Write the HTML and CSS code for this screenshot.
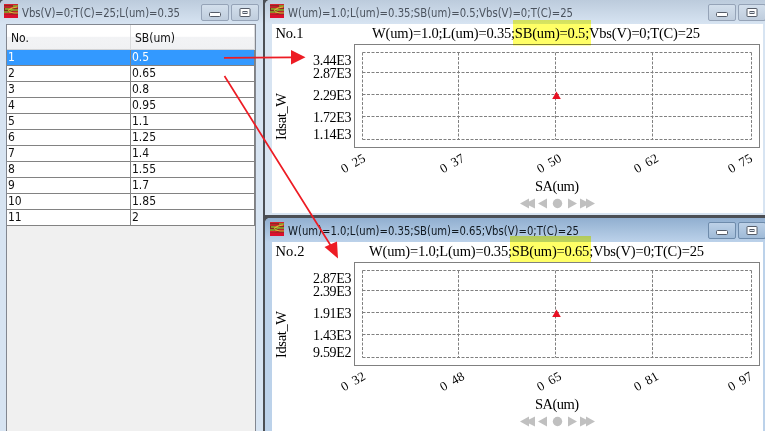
FILE: index.html
```html
<!DOCTYPE html>
<html lang="en">
<head>
<meta charset="utf-8">
<title>Idsat plots</title>
<link rel="stylesheet" href="styles.css">
</head>
<body>
<svg class="defs" width="0" height="0">
  <symbol id="logo" viewBox="0 0 14 14">
    <rect width="14" height="14" fill="#7a2c1c"/>
    <rect y="10.500" width="14" height="3.500" fill="#dc0f2e"/>
    <path d="M0 .7h14M0 3h5l4 .5h5M0 9.500h5l5-1.500h4" stroke="#d82030" stroke-width="1.300" fill="none"/>
    <path d="M1 5h5l4 1h4M0 8h4l4-1.500M9 2h5" stroke="#8cae2c" stroke-width="1.300" fill="none"/>
    <path d="M4 6.500l4-2.500 5-1M5 8l5 1h4" stroke="#e0b838" stroke-width="1.100" fill="none"/>
  </symbol>
  <symbol id="min" viewBox="0 0 12 12"><rect x=".5" y="5.500" width="11" height="4" rx="1" fill="#fff" stroke="#555c68"/></symbol>
  <symbol id="max" viewBox="0 0 12 12"><rect x="1" y="1.500" width="10" height="8" rx=".5" fill="#fff" stroke="#555c68"/><rect x="4" y="4.500" width="4" height="2" fill="#dfe6ee" stroke="#555c68"/></symbol>
  <symbol id="grid" viewBox="0 0 491 189">
    <rect class="frame" x="82.500" y="20.500" width="405" height="103"/>
    <path class="dash" d="M90.500 28.500h389M90.500 48.500h389M90.500 70.500h389M90.500 92.500h389M90.500 115.500h389M90.500 28.500v87M186.500 28.500v87M283.500 28.500v87M380.500 28.500v87M479.500 28.500v87"/>
    <path fill="#e81123" d="M284.500 67.500l4.300 7.500h-8.600z"/>
    <g fill="#c0c0c0">
      <path d="M248 179.500l9-5v3l6-3v10l-6-3v3zM266 179.500l9-5v10z"/>
      <circle cx="285.500" cy="179.500" r="4.700"/>
      <path d="M305 179.500l-9-5v10zM323 179.500l-9-5v3l-6-3v10l6-3v3z"/>
    </g>
  </symbol>
</svg>
<div class="desktop">
  <section class="window list">
    <header class="bar">
      <svg class="logo"><use href="#logo"/></svg>
      <svg class="caption"><text x="0" y="13" textLength="158" lengthAdjust="spacingAndGlyphs">Vbs(V)=0;T(C)=25;L(um)=0.35</text></svg>
      <span class="btn"><svg><use href="#min"/></svg></span><span class="btn"><svg><use href="#max"/></svg></span>
    </header>
    <div class="pane">
      <div class="row head"><span>No.</span><span>SB(um)</span></div>
      <div class="row selected"><span>1</span><span>0.5</span></div>
      <div class="row"><span>2</span><span>0.65</span></div>
      <div class="row"><span>3</span><span>0.8</span></div>
      <div class="row"><span>4</span><span>0.95</span></div>
      <div class="row"><span>5</span><span>1.1</span></div>
      <div class="row"><span>6</span><span>1.25</span></div>
      <div class="row"><span>7</span><span>1.4</span></div>
      <div class="row"><span>8</span><span>1.55</span></div>
      <div class="row"><span>9</span><span>1.7</span></div>
      <div class="row"><span>10</span><span>1.85</span></div>
      <div class="row"><span>11</span><span>2</span></div>
    </div>
  </section>
  <div class="plots">
    <section class="window plot">
      <header class="bar">
        <svg class="logo"><use href="#logo"/></svg>
        <svg class="caption"><text x="0" y="13" textLength="285" lengthAdjust="spacingAndGlyphs">W(um)=1.0;L(um)=0.35;SB(um)=0.5;Vbs(V)=0;T(C)=25</text></svg>
        <span class="btn"><svg><use href="#min"/></svg></span><span class="btn"><svg><use href="#max"/></svg></span>
      </header>
      <svg class="chart" viewBox="0 0 491 189">
        <text x="3.500" y="14" textLength="28">No.1</text>
        <text x="100" y="14" textLength="328">W(um)=1.0;L(um)=0.35;SB(um)=0.5;Vbs(V)=0;T(C)=25</text>
        <use href="#grid"/>
        <text class="tick" x="41" y="41" textLength="38.500">3.44E3</text>
        <text class="tick" x="41" y="54" textLength="38.500">2.87E3</text>
        <text class="tick" x="41" y="76" textLength="38.500">2.29E3</text>
        <text class="tick" x="41" y="98" textLength="38.500">1.72E3</text>
        <text class="tick" x="41" y="115" textLength="38.500">1.14E3</text>
        <text transform="translate(14 116) rotate(-90)" textLength="47">Idsat_W</text>
        <text class="xtick" transform="translate(72 149.500) rotate(-30)">0 25</text>
        <text class="xtick" transform="translate(171 149.500) rotate(-30)">0 37</text>
        <text class="xtick" transform="translate(268 149.500) rotate(-30)">0 50</text>
        <text class="xtick" transform="translate(365 149.500) rotate(-30)">0 62</text>
        <text class="xtick" transform="translate(459 149.500) rotate(-30)">0 75</text>
        <text x="263" y="167" textLength="44">SA(um)</text>
      </svg>
    </section>
    <section class="window plot active">
      <header class="bar">
        <svg class="logo"><use href="#logo"/></svg>
        <svg class="caption"><text x="0" y="13" textLength="291" lengthAdjust="spacingAndGlyphs">W(um)=1.0;L(um)=0.35;SB(um)=0.65;Vbs(V)=0;T(C)=25</text></svg>
        <span class="btn"><svg><use href="#min"/></svg></span><span class="btn"><svg><use href="#max"/></svg></span>
      </header>
      <svg class="chart" viewBox="0 0 491 189">
        <text x="3.500" y="14" textLength="29">No.2</text>
        <text x="97" y="14" textLength="335">W(um)=1.0;L(um)=0.35;SB(um)=0.65;Vbs(V)=0;T(C)=25</text>
        <use href="#grid"/>
        <text class="tick" x="41" y="41" textLength="38.500">2.87E3</text>
        <text class="tick" x="41" y="54" textLength="38.500">2.39E3</text>
        <text class="tick" x="41" y="76" textLength="38.500">1.91E3</text>
        <text class="tick" x="41" y="98" textLength="38.500">1.43E3</text>
        <text class="tick" x="41" y="115" textLength="38.500">9.59E2</text>
        <text transform="translate(14 116) rotate(-90)" textLength="47">Idsat_W</text>
        <text class="xtick" transform="translate(72 149.500) rotate(-30)">0 32</text>
        <text class="xtick" transform="translate(171 149.500) rotate(-30)">0 48</text>
        <text class="xtick" transform="translate(268 149.500) rotate(-30)">0 65</text>
        <text class="xtick" transform="translate(365 149.500) rotate(-30)">0 81</text>
        <text class="xtick" transform="translate(459 149.500) rotate(-30)">0 97</text>
        <text x="263" y="167" textLength="44">SA(um)</text>
      </svg>
    </section>
  </div>
  <svg class="notes marker" viewBox="0 0 765 431">
    <rect x="513" y="20" width="78" height="25.500"/><rect x="510" y="236" width="81" height="26"/>
  </svg>
  <svg class="notes" viewBox="0 0 765 431">
    <g stroke="#ed1c24" stroke-width="1.700"><path d="M224 57.800L292 57.300M224.500 76L331 246"/></g>
    <path fill="#ed1c24" d="M291 50l14.500 7.300-14.500 7.200zM324.500 247l12.500-5.500 1 17z"/>
  </svg>
</div>
</body>
</html>
```
FILE: styles.css
```css
* { box-sizing: border-box; }
body { margin: 0; overflow: hidden; }
svg { display: block; }
.defs { position: absolute; }
.desktop {
  position: relative;
  display: flex;
  gap: 2px;
  width: 765px;
  height: 431px;
  overflow: hidden;
  background: #4b4f55;
}
.window {
  --frame: #d7e4f2;
  background: var(--frame);
  border-radius: 5px 0 0 0;
  font-family: "DejaVu Sans Condensed", "DejaVu Sans", sans-serif;
  font-stretch: condensed;
  font-size: 12px;
}
.list { width: 263px; padding: 0 7px 0 6px; }
.bar {
  display: flex;
  align-items: flex-start;
  height: 24px;
  padding-top: 4px;
  border-radius: 5px 0 0 0;
  background: linear-gradient(#bccbdc, #d7e4f2);
}
.list .bar { margin: 0 -7px 0 -6px; padding: 4px 4px 0; }
.logo { width: 14px; height: 14px; flex: none; margin-right: 4px; }
.caption { flex: 1; min-width: 0; height: 18px; font-size: 12.5px; fill: #4b535e; }
.btn {
  display: flex;
  justify-content: center;
  align-items: center;
  flex: none;
  width: 28px;
  height: 17px;
  margin-left: 2px;
  border: 1px solid #95a3b7;
  border-radius: 2px;
  background: linear-gradient(#d3dfec, #bfcddd);
}
.btn svg { width: 12px; height: 12px; }
.pane {
  height: 410px;
  border: 1px solid #828790;
  background: #f0f0f0;
}
.row {
  display: grid;
  grid-template: 100% / 124px 124px;
  height: 16px;
  line-height: 15px;
  background: #fff;
  color: #111;
}
.row span { padding-left: 1px; border-right: 1px solid #828282; border-bottom: 1px solid #828282; }
.row.head { height: 25px; line-height: 26px; background: linear-gradient(#fff 45%, #f2f3f5 50%, #f0f1f3); }
.row.head span { padding-left: 4px; border-right-color: #dadbdd; border-bottom-color: #d2d3d5; }
.row.selected { background: #3399ff; color: #fff; }
.plots { display: flex; flex-direction: column; gap: 3px; width: 500px; }
.plot { height: 215px; padding: 0 2px 0 7px; }
.plot .bar { margin: 0 -3px 0 -7px; padding-left: 5px; }
.active { --frame: #bcd2ea; height: 213px; }
.active .bar { background: linear-gradient(#91afd0, #bcd2ea); }
.active .caption { fill: #101820; }
.active .btn { border-color: #6e8bab; background: linear-gradient(#bdd1e7, #9fbad7); }
.chart {
  width: 491px;
  height: 189px;
  background: #fff;
  font-family: "Liberation Serif", serif;
  font-size: 14.5px;
}
.tick { font-size: 14px; }
.xtick { font-size: 13px; word-spacing: 3px; }
.frame { fill: none; stroke: #808080; }
.dash { fill: none; stroke: #808080; stroke-dasharray: 3 1.5; }
.notes { position: absolute; inset: 0; width: 765px; height: 431px; }
.marker { fill: #ffff66; mix-blend-mode: multiply; }
```
